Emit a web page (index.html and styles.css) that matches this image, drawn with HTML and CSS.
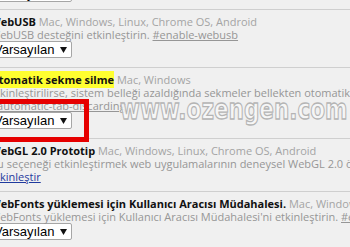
FILE: index.html
```html
<!DOCTYPE html>
<html lang="tr">
<head>
<meta charset="utf-8">
<link rel="stylesheet" href="styles.css">
</head>
<body>
<div class="page">
  <div class="exp exp-first">
    <div class="select"><span>Varsayılan</span><svg class="arrow" width="7" height="6" viewBox="0 0 7 6"><path d="M0 0H7L3.5 6Z"/></svg></div>
  </div>
  <div class="exp">
    <div class="line"><span class="title">WebUSB</span> <span class="plat">Mac, Windows, Linux, Chrome OS, Android</span></div>
    <div class="line desc">WebUSB desteğini etkinleştirin. <a class="ref">#enable-webusb</a></div>
    <div class="select"><span>Varsayılan</span><svg class="arrow" width="7" height="6" viewBox="0 0 7 6"><path d="M0 0H7L3.5 6Z"/></svg></div>
  </div>
  <div class="exp">
    <div class="line"><span class="title hl">Otomatik sekme silme</span> <span class="plat">Mac, Windows</span></div>
    <div class="line desc">Etkinleştirilirse, sistem belleği azaldığında sekmeler bellekten otomatik olarak silinir. Silinen sekmeler sekme şeridinde görünmeye devam eder ve tıklandığında yeniden yüklenir.</div>
    <div class="line desc"><a class="ref">#automatic-tab-discarding</a></div>
    <div class="select"><span>Varsayılan</span><svg class="arrow" width="7" height="6" viewBox="0 0 7 6"><path d="M0 0H7L3.5 6Z"/></svg></div>
  </div>
  <div class="exp">
    <div class="line"><span class="title">WebGL 2.0 Prototip</span> <span class="plat">Mac, Windows, Linux, Chrome OS, Android</span></div>
    <div class="line desc">Bu seçeneği etkinleştirmek web uygulamalarının deneysel WebGL 2.0 özelliklerine erişmesini sağlar.</div>
    <div class="line"><a class="action">Etkinleştir</a></div>
  </div>
  <div class="exp">
    <div class="line"><span class="title">WebFonts yüklemesi için Kullanıcı Aracısı Müdahalesi.</span> <span class="plat">Mac, Windows, Linux, Chrome OS, Android</span></div>
    <div class="line desc">WebFonts yüklemesi için Kullanıcı Aracısı Müdahalesi'ni etkinleştirin. <a class="ref">#enable-webfonts-intervention-v2</a></div>
    <div class="select"><span>Varsayılan</span><svg class="arrow" width="7" height="6" viewBox="0 0 7 6"><path d="M0 0H7L3.5 6Z"/></svg></div>
  </div>
</div>
<div class="watermark">www.ozengen.com</div>
<div class="redbox"></div>
</body>
</html>
```

FILE: styles.css
```css
html, body {
  margin: 0;
  padding: 0;
  width: 350px;
  height: 247px;
  overflow: hidden;
  background: #f0f0f0;
}

.page {
  margin-left: -10px;
  margin-top: -15px;
  font-family: "Open Sans", sans-serif;
  font-size: 11px;
  line-height: 13px;
  color: #969696;
}

.exp {
  border-top: 1px solid #cfcfcf;
  padding: 5px 0 8px;
}

.exp-first {
  border-top: none;
  padding: 0 0 6px;
}

.line {
  white-space: nowrap;
  height: 13px;
}

.title {
  color: #111;
  font-weight: 700;
}

.hl {
  background: #ffff30;
  padding: 1px 0;
}

.plat {
  color: #a4a4a4;
}

.ref {
  color: #969696;
  text-decoration: underline;
}

.action {
  color: #1f3a9e;
  text-decoration: underline;
}

.select {
  display: flex;
  align-items: center;
  gap: 6px;
  box-sizing: border-box;
  width: 82px;
  height: 17px;
  margin-bottom: 1px;
  padding: 0 0 0 3px;
  background: #fff;
  border: 1px solid #a6a6a6;
  border-radius: 2px;
  font-family: "Liberation Sans", Arial, sans-serif;
  font-size: 13px;
  line-height: 15px;
  color: #000;
}

.arrow {
  fill: #111;
}

.watermark {
  position: absolute;
  left: 120px;
  top: 96px;
  font-family: "DejaVu Sans", sans-serif;
  font-weight: 700;
  font-size: 22px;
  line-height: 22px;
  color: rgba(247, 247, 247, 0.9);
  -webkit-text-stroke: 1px #b4b4b4;
  transform-origin: 0 0;
  transform: scale(0.98, 1.3);
}

.redbox {
  position: absolute;
  left: -10px;
  top: 99px;
  width: 89px;
  height: 33px;
  border: 5px solid #e60000;
}
```
